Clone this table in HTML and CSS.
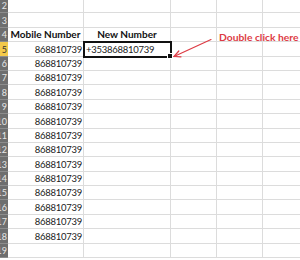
FILE: index.html
```html
<!DOCTYPE html>
<html>
<head>
<meta charset="utf-8">
<link rel="stylesheet" href="styles.css">
</head>
<body>
<div class="sheet">
  <div class="row"><div class="rh"><span>2</span></div><div class="c"></div><div class="c"></div><div class="c"></div><div class="c"></div><div class="c"></div></div>
  <div class="row"><div class="rh"><span>3</span></div><div class="c"></div><div class="c"></div><div class="c"></div><div class="c"></div><div class="c"></div></div>
  <div class="row"><div class="rh"><span>4</span></div><div class="c b ctr">Mobile Number</div><div class="c b ctr">New Number</div><div class="c"></div><div class="c"></div><div class="c"></div></div>
  <div class="row"><div class="rh sel"><span>5</span></div><div class="c r">868810739</div><div class="c active">+353868810739</div><div class="c"></div><div class="c"></div><div class="c"></div></div>
  <div class="row"><div class="rh"><span>6</span></div><div class="c r">868810739</div><div class="c"></div><div class="c"></div><div class="c"></div><div class="c"></div></div>
  <div class="row"><div class="rh"><span>7</span></div><div class="c r">868810739</div><div class="c"></div><div class="c"></div><div class="c"></div><div class="c"></div></div>
  <div class="row"><div class="rh"><span>8</span></div><div class="c r">868810739</div><div class="c"></div><div class="c"></div><div class="c"></div><div class="c"></div></div>
  <div class="row"><div class="rh"><span>9</span></div><div class="c r">868810739</div><div class="c"></div><div class="c"></div><div class="c"></div><div class="c"></div></div>
  <div class="row"><div class="rh"><span>10</span></div><div class="c r">868810739</div><div class="c"></div><div class="c"></div><div class="c"></div><div class="c"></div></div>
  <div class="row"><div class="rh"><span>11</span></div><div class="c r">868810739</div><div class="c"></div><div class="c"></div><div class="c"></div><div class="c"></div></div>
  <div class="row"><div class="rh"><span>12</span></div><div class="c r">868810739</div><div class="c"></div><div class="c"></div><div class="c"></div><div class="c"></div></div>
  <div class="row"><div class="rh"><span>13</span></div><div class="c r">868810739</div><div class="c"></div><div class="c"></div><div class="c"></div><div class="c"></div></div>
  <div class="row"><div class="rh"><span>14</span></div><div class="c r">868810739</div><div class="c"></div><div class="c"></div><div class="c"></div><div class="c"></div></div>
  <div class="row"><div class="rh"><span>15</span></div><div class="c r">868810739</div><div class="c"></div><div class="c"></div><div class="c"></div><div class="c"></div></div>
  <div class="row"><div class="rh"><span>16</span></div><div class="c r">868810739</div><div class="c"></div><div class="c"></div><div class="c"></div><div class="c"></div></div>
  <div class="row"><div class="rh"><span>17</span></div><div class="c r">868810739</div><div class="c"></div><div class="c"></div><div class="c"></div><div class="c"></div></div>
  <div class="row"><div class="rh"><span>18</span></div><div class="c r">868810739</div><div class="c"></div><div class="c"></div><div class="c"></div><div class="c"></div></div>
  <div class="row"><div class="rh"><span>19</span></div><div class="c"></div><div class="c"></div><div class="c"></div><div class="c"></div><div class="c"></div></div>
  <div class="note">
    <svg class="arrow" width="300" height="80" viewBox="0 0 300 80">
      <g stroke="#dd3b44" stroke-width="1.2" fill="none" stroke-linecap="round">
        <line x1="211" y1="39.5" x2="174" y2="56.5"/>
        <line x1="174" y1="56.5" x2="178.8" y2="51"/>
        <line x1="174" y1="56.5" x2="181" y2="56.8"/>
      </g>
    </svg>
    <span class="label">Double click here</span>
  </div>
</div>
</body>
</html>
```
FILE: styles.css
```css
html, body {
  margin: 0;
  padding: 0;
  background: #fff;
}
body {
  width: 300px;
  height: 260px;
  overflow: hidden;
  font-family: Lato, "Liberation Sans", sans-serif;
  font-size: 9.5px;
  letter-spacing: -0.25px;
  color: #222;
}
.sheet {
  position: relative;
  margin-top: -1px;
}
.row {
  display: grid;
  grid-template-columns: 8px 76px 87px 46px 46px 46px;
  height: 14.4px;
}
.c {
  border-right: 1px solid #dcdcdc;
  border-bottom: 1px solid #dcdcdc;
  display: flex;
  align-items: flex-end;
  padding: 0 2px 1px 2px;
  white-space: nowrap;
  overflow: hidden;
  position: relative;
  line-height: 11px;
}
.r { justify-content: flex-end; padding-right: 1px; }
.ctr { justify-content: center; padding: 0 0 1px 0; overflow: visible; }
.b { font-weight: 700; color: #111; font-size: 10px; letter-spacing: 0; }
.rh {
  background: #6e6e6e;
  border-bottom: 1px solid #8c8c8c;
  color: #e6e6e6;
  display: flex;
  justify-content: flex-end;
  align-items: flex-end;
  overflow: hidden;
  padding: 0 1px 1px 0;
  line-height: 11px;
  font-size: 9px;
  letter-spacing: 0;
}
.rh.sel {
  background: #f3c94a;
  color: #333;
}
.active {
  overflow: visible;
  outline: 2px solid #111;
  outline-offset: -1px;
  z-index: 2;
}
.active::after {
  content: "";
  position: absolute;
  right: -3px;
  bottom: -3px;
  width: 4px;
  height: 4px;
  background: #111;
  border: 1px solid #fff;
}
.note {
  position: absolute;
  left: 0;
  top: 1px;
  width: 300px;
  height: 80px;
  z-index: 3;
}
.arrow {
  position: absolute;
  left: 0;
  top: 0;
}
.label {
  position: absolute;
  left: 219px;
  top: 31px;
  font-weight: 700;
  font-size: 10.3px;
  letter-spacing: 0;
  color: #dd3b44;
  white-space: nowrap;
}
```
